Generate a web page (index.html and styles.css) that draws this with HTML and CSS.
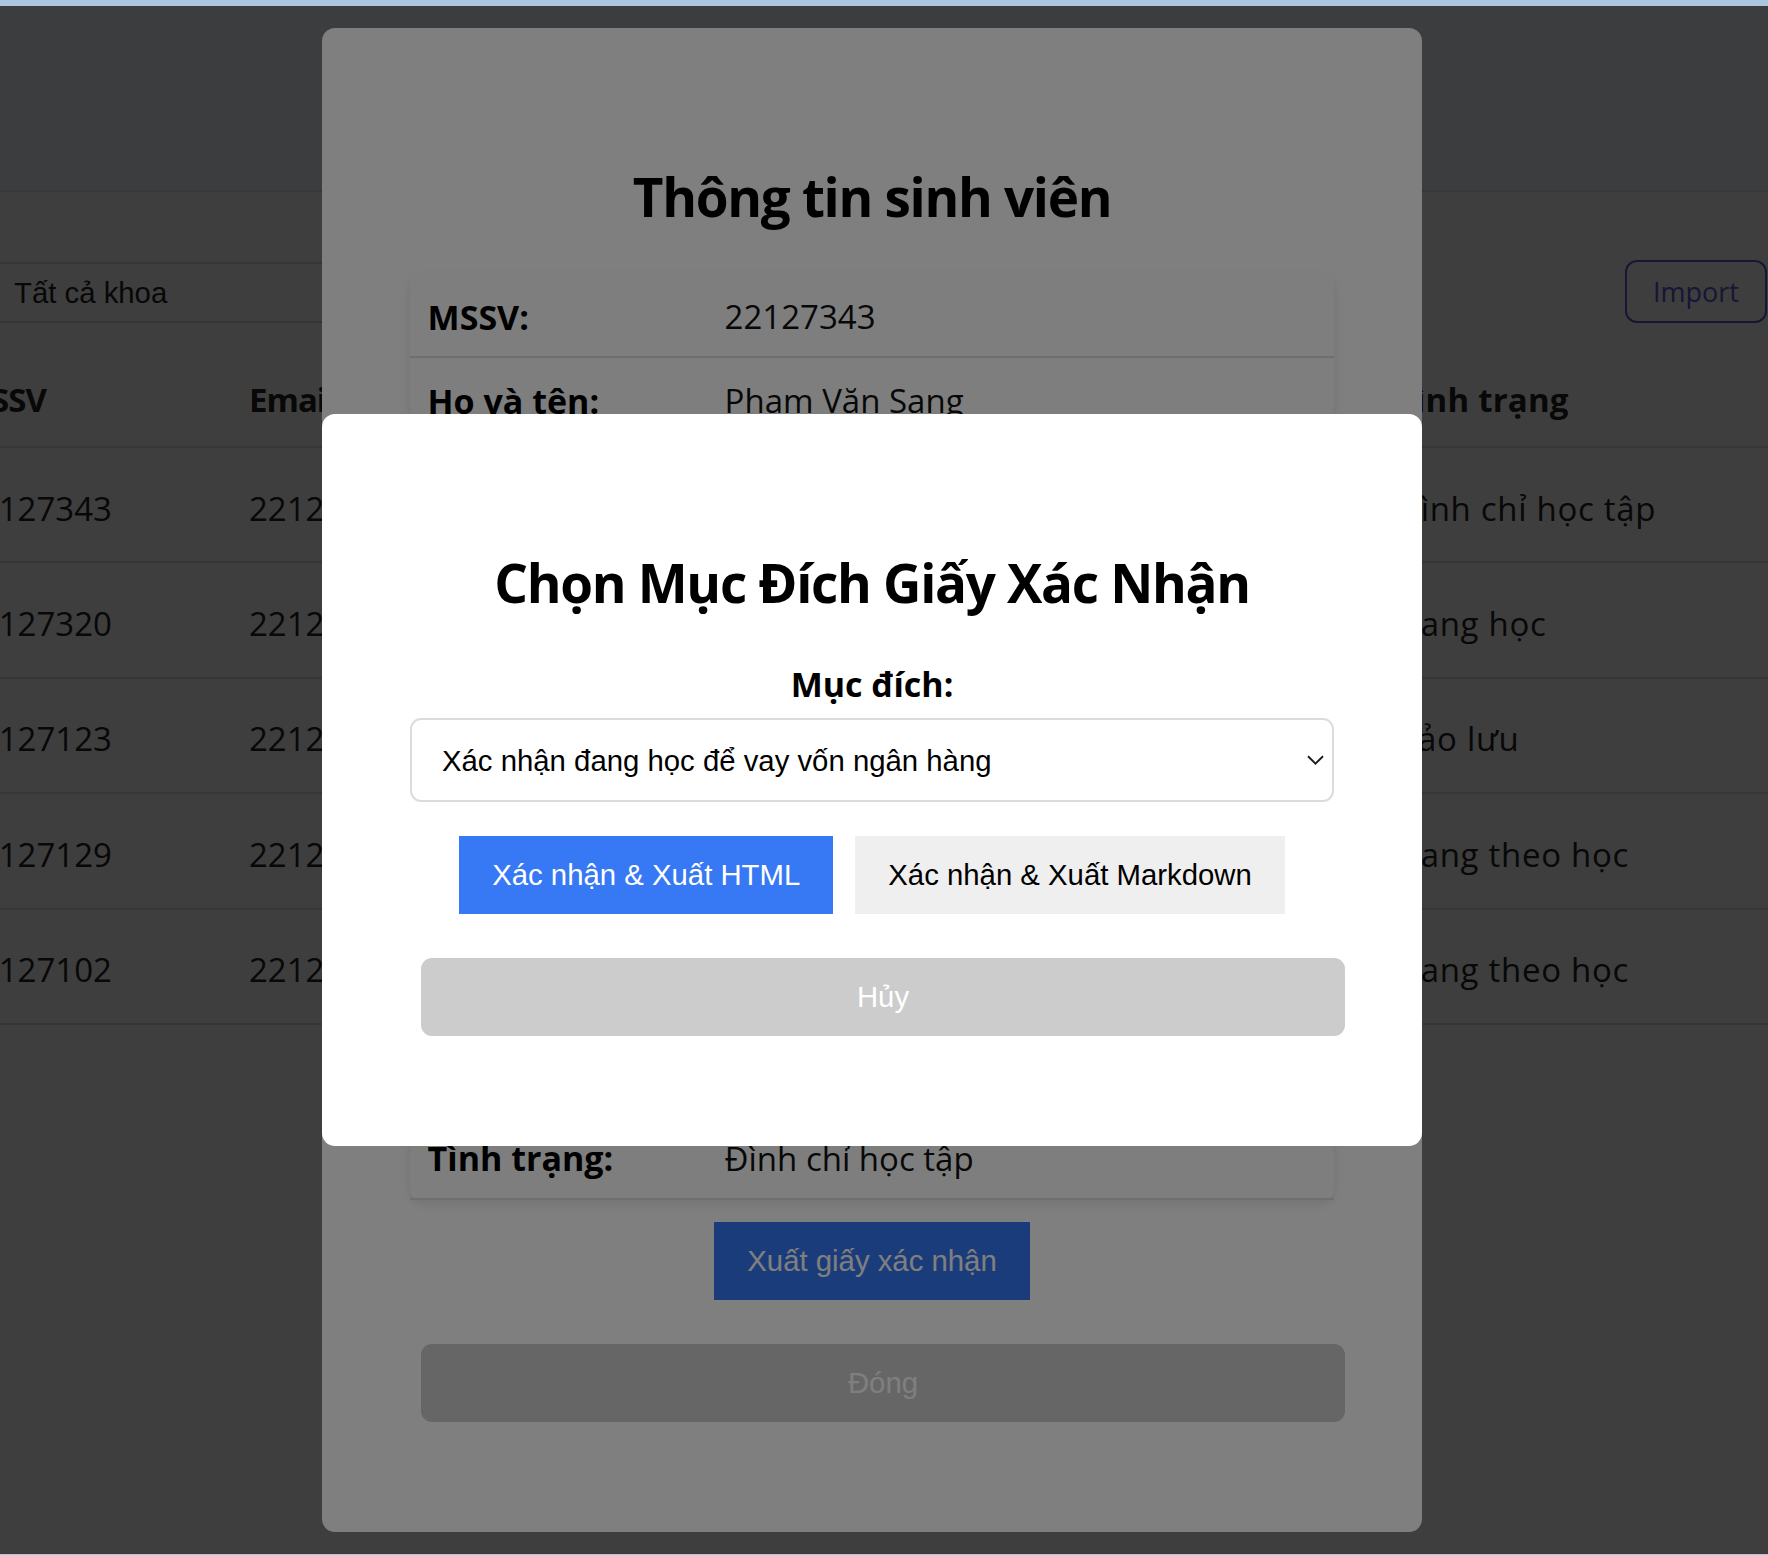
FILE: index.html
```html
<!DOCTYPE html>
<html lang="vi">
<head>
<meta charset="utf-8">
<title>Quản lý sinh viên</title>
<link rel="stylesheet" href="styles.css">
</head>
<body>
<div class="chrome-top"></div>

<div class="page">
  <header class="app-header"></header>

  <section class="toolbar">
    <select class="faculty-filter">
      <option>Tất cả khoa</option>
    </select>
    <button class="import-btn" type="button">Import</button>
  </section>

  <div class="table">
    <div class="tr th">
      <div class="c c1">MSSV</div>
      <div class="c c2">Email</div>
      <div class="c c3">Họ tên</div>
      <div class="c c4">Khoa</div>
      <div class="c c5">Tình trạng</div>
    </div>
    <div class="tr">
      <div class="c c1">22127343</div>
      <div class="c c2">22127343@student.hcmus.edu.vn</div>
      <div class="c c3">Phạm Văn Sang</div>
      <div class="c c4">Khoa Luật</div>
      <div class="c c5">Đình chỉ học tập</div>
    </div>
    <div class="tr">
      <div class="c c1">22127320</div>
      <div class="c c2">22127320@student.hcmus.edu.vn</div>
      <div class="c c3">Nguyễn Văn An</div>
      <div class="c c4">Khoa Tiếng Anh</div>
      <div class="c c5">Đang học</div>
    </div>
    <div class="tr">
      <div class="c c1">22127123</div>
      <div class="c c2">22127123@student.hcmus.edu.vn</div>
      <div class="c c3">Trần Thị Bình</div>
      <div class="c c4">Khoa Tiếng Nhật</div>
      <div class="c c5">Bảo lưu</div>
    </div>
    <div class="tr">
      <div class="c c1">22127129</div>
      <div class="c c2">22127129@student.hcmus.edu.vn</div>
      <div class="c c3">Lê Minh Châu</div>
      <div class="c c4">Khoa Tiếng Pháp</div>
      <div class="c c5">Đang theo học</div>
    </div>
    <div class="tr">
      <div class="c c1">22127102</div>
      <div class="c c2">22127102@student.hcmus.edu.vn</div>
      <div class="c c3">Võ Quốc Dũng</div>
      <div class="c c4">Khoa Luật</div>
      <div class="c c5">Đang theo học</div>
    </div>
  </div>
</div>

<div class="overlay">
  <div class="modal info-modal">
    <h2 class="modal-title">Thông tin sinh viên</h2>
    <div class="info-card">
      <div class="info-row"><span class="info-label">MSSV:</span><span class="info-value">22127343</span></div>
      <div class="info-row"><span class="info-label">Họ và tên:</span><span class="info-value">Phạm Văn Sang</span></div>
      <div class="info-row"><span class="info-label">Ngày sinh:</span><span class="info-value">12/05/2004</span></div>
      <div class="info-row"><span class="info-label">Giới tính:</span><span class="info-value">Nam</span></div>
      <div class="info-row"><span class="info-label">Khoa:</span><span class="info-value">Khoa Luật</span></div>
      <div class="info-row"><span class="info-label">Khóa:</span><span class="info-value">2022</span></div>
      <div class="info-row"><span class="info-label">Chương trình:</span><span class="info-value">Chính quy</span></div>
      <div class="info-row"><span class="info-label">Địa chỉ:</span><span class="info-value">TP. Hồ Chí Minh</span></div>
      <div class="info-row"><span class="info-label">Email:</span><span class="info-value">22127343@student.hcmus.edu.vn</span></div>
      <div class="info-row"><span class="info-label">Số điện thoại:</span><span class="info-value">0901234567</span></div>
      <div class="info-row"><span class="info-label">Tình trạng:</span><span class="info-value">Đình chỉ học tập</span></div>
    </div>
    <button class="btn btn-primary export-btn" type="button">Xuất giấy xác nhận</button>
    <button class="btn btn-muted" type="button">Đóng</button>
  </div>
</div>

<div class="overlay">
  <div class="modal purpose-modal">
    <h2 class="modal-title">Chọn Mục Đích Giấy Xác Nhận</h2>
    <label class="purpose-label" for="purpose">Mục đích:</label>
    <div class="select-wrap">
      <select id="purpose" class="purpose-select">
        <option>Xác nhận đang học để vay vốn ngân hàng</option>
        <option>Xác nhận làm thủ tục tạm hoãn nghĩa vụ quân sự</option>
        <option>Xác nhận làm hồ sơ xin việc / thực tập</option>
      </select>
      <svg class="chevron" width="17" height="10" viewBox="0 0 17 10" aria-hidden="true">
        <polyline points="1,1.2 8.5,8.6 16,1.2" fill="none" stroke="#1a1a1a" stroke-width="1.9"/>
      </svg>
    </div>
    <div class="action-row">
      <button class="btn btn-primary" type="button">Xác nhận &amp; Xuất HTML</button>
      <button class="btn btn-secondary" type="button">Xác nhận &amp; Xuất Markdown</button>
    </div>
    <button class="btn btn-muted" type="button">Hủy</button>
  </div>
</div>

<div class="chrome-bottom"></div>
</body>
</html>
```

FILE: styles.css
```css
* {
  box-sizing: border-box;
}

html,
body {
  margin: 0;
  padding: 0;
}

body {
  width: 1768px;
  height: 1555px;
  overflow: hidden;
  background: #f9f9f9;
  font-family: "Open Sans", "Noto Sans", sans-serif;
  font-size: 33px;
  color: #222;
}

/* window chrome lines */
.chrome-top {
  position: fixed;
  top: 0;
  left: 0;
  right: 0;
  height: 6px;
  background: #abc6de;
  z-index: 10;
}

.chrome-bottom {
  position: fixed;
  bottom: 0;
  left: 0;
  right: 0;
  height: 1px;
  background: #abc6de;
  z-index: 10;
}

/* background page */
.app-header {
  height: 192px;
  background: #f1f4fb;
  border-bottom: 2.2px solid #e0e0e0;
}

.toolbar {
  display: flex;
  justify-content: space-between;
  align-items: flex-end;
  padding: 68px 1px 0 0;
}

.faculty-filter {
  -webkit-appearance: none;
  appearance: none;
  margin-left: -12px;
  width: 560px;
  height: 61px;
  padding: 0 0 0 24px;
  border: 2.2px solid #d4d4d4;
  background: #fbfbfb;
  font-family: "Liberation Sans", Arial, sans-serif;
  font-size: 29.33px;
  color: #222;
}

.import-btn {
  height: 63px;
  padding: 0 26px;
  border: 2.2px solid #5a5ad6;
  border-radius: 12px;
  background: transparent;
  color: #5a5ad6;
  font-family: "Open Sans", "Noto Sans", sans-serif;
  font-size: 27px;
}

.table {
  margin: 29px 0 0 -39px;
}

.tr {
  display: flex;
  align-items: center;
  height: 115.4px;
  padding-top: 7px;
  border-bottom: 2.2px solid #d9d9d9;
  white-space: nowrap;
}

.th {
  height: 96px;
  padding-top: 1px;
  font-weight: 700;
  letter-spacing: -1px;
}

.c {
  overflow: hidden;
}

.c1 { width: 288px; }
.c2 { width: 420px; }
.c3 { width: 380px; }
.c4 { width: 347px; }

.c5 {
  flex: 1;
  letter-spacing: 0.7px;
}

.th .c5 {
  letter-spacing: 0.2px;
}

/* modals */
.overlay {
  position: fixed;
  inset: 0;
  display: flex;
  align-items: center;
  justify-content: center;
  padding: 5px 24px 0 0;
  background: rgba(0, 0, 0, 0.5);
}

.modal {
  width: 1100px;
  padding: 88px;
  background: #fff;
  border-radius: 13px;
  color: #111;
}

.modal-title {
  margin: 43px 0 38px;
  text-align: center;
  font-size: 53px;
  line-height: 76px;
  font-weight: 700;
  letter-spacing: -1.3px;
  color: #000;
}

.purpose-modal .modal-title {
  margin-bottom: 40px;
}

.info-card {
  background: #fdfdfd;
  border-radius: 11px;
  box-shadow: 0 4px 11px rgba(0, 0, 0, 0.1);
}

.info-row {
  display: flex;
  align-items: center;
  height: 84.2px;
  padding: 4px 17.6px 0;
  border-bottom: 2.2px solid #dedede;
  white-space: nowrap;
}

.info-label {
  width: 297px;
  font-weight: 700;
  font-size: 34px;
  color: #000;
}

.info-value {
  color: #111;
}

.btn {
  font-family: "Liberation Sans", Arial, sans-serif;
  font-size: 29.33px;
  line-height: 34px;
  padding: 22px 33px;
  border: none;
  border-radius: 0;
}

.btn-primary {
  background: #3778f4;
  color: #fff;
}

.btn-secondary {
  background: #efefef;
  color: #000;
}

.export-btn {
  display: block;
  margin: 22px auto 0;
}

.btn-muted {
  display: block;
  width: 100%;
  margin: 44px 0 22px 11px;
  background: #ccc;
  color: #fff;
  border-radius: 11px;
}

.purpose-label {
  display: block;
  margin-bottom: 11px;
  text-align: center;
  font-size: 34px;
  line-height: 46px;
  font-weight: 700;
  color: #000;
}

.select-wrap {
  position: relative;
}

.purpose-select {
  -webkit-appearance: none;
  appearance: none;
  display: block;
  width: 100%;
  height: 84px;
  padding: 0 60px 0 30px;
  border: 2.2px solid #dcdcdc;
  border-radius: 11px;
  background: #fff;
  font-family: "Liberation Sans", Arial, sans-serif;
  font-size: 29.33px;
  color: #000;
}

.chevron {
  position: absolute;
  right: 10px;
  top: 37px;
}

.action-row {
  display: flex;
  justify-content: center;
  gap: 22px;
  margin-top: 34px;
}
```
